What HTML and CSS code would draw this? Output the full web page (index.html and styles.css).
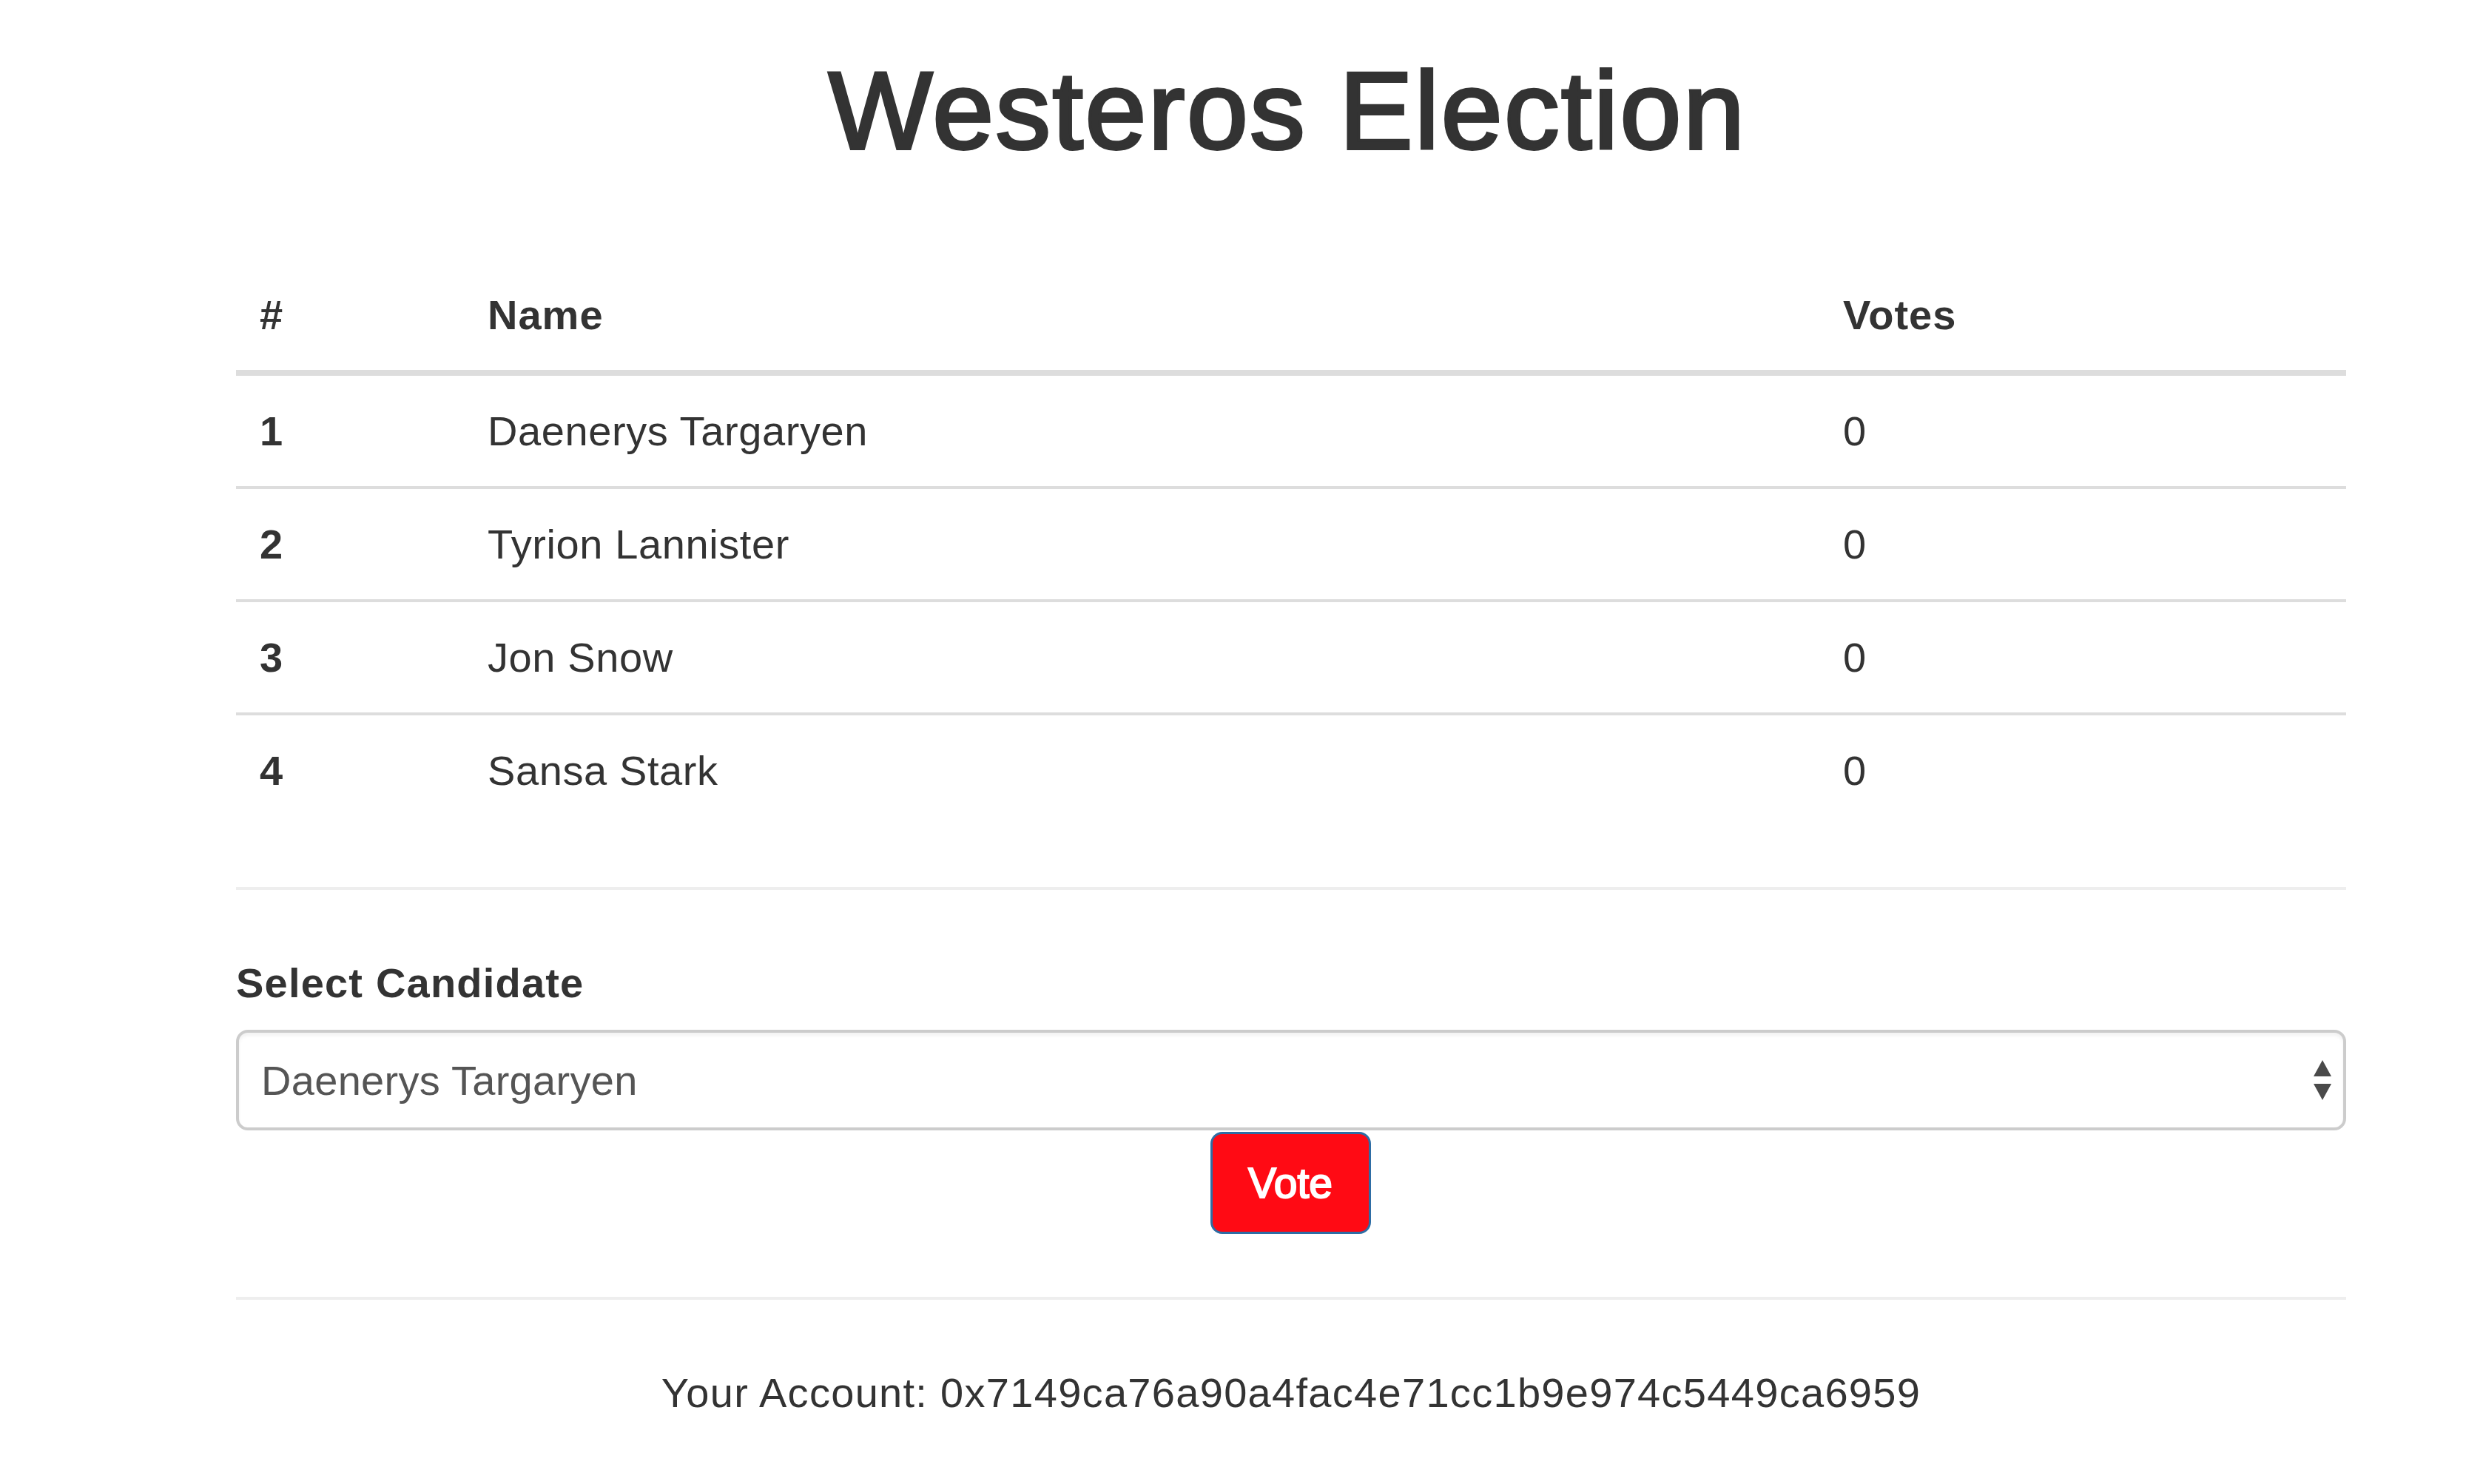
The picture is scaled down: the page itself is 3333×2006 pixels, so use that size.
FILE: index.html
```html
<!DOCTYPE html>
<html lang="en">
<head>
<meta charset="utf-8">
<title>Westeros Election</title>
<link rel="stylesheet" href="styles.css">
</head>
<body>
<div class="container">
  <h1 class="title">Westeros Election</h1>
  <table class="candidates">
    <colgroup>
      <col class="col-num">
      <col class="col-name">
      <col class="col-votes">
    </colgroup>
    <thead>
      <tr><th>#</th><th>Name</th><th>Votes</th></tr>
    </thead>
    <tbody>
      <tr><th>1</th><td>Daenerys Targaryen</td><td>0</td></tr>
      <tr><th>2</th><td>Tyrion Lannister</td><td>0</td></tr>
      <tr><th>3</th><td>Jon Snow</td><td>0</td></tr>
      <tr><th>4</th><td>Sansa Stark</td><td>0</td></tr>
    </tbody>
  </table>
  <hr class="rule rule-top">
  <form class="vote-form">
    <label class="field-label" for="candidate">Select Candidate</label>
    <div class="select-wrap">
      <select id="candidate" class="select">
        <option>Daenerys Targaryen</option>
        <option>Tyrion Lannister</option>
        <option>Jon Snow</option>
        <option>Sansa Stark</option>
      </select>
      <svg class="select-arrows" width="24" height="54" viewBox="0 0 24 54" aria-hidden="true">
        <polygon points="0,22 24,22 12,0" fill="#4a4a4a"/>
        <polygon points="0,32 24,32 12,54" fill="#4a4a4a"/>
      </svg>
    </div>
    <div class="actions">
      <button type="button" class="btn-vote">Vote</button>
    </div>
  </form>
  <hr class="rule rule-bottom">
  <p class="account">Your Account: 0x7149ca76a90a4fac4e71cc1b9e974c5449ca6959</p>
</div>
</body>
</html>
```

FILE: styles.css
```css
html, body {
  margin: 0;
  padding: 0;
  background: #ffffff;
}

body {
  font-family: "Liberation Sans", Arial, Helvetica, sans-serif;
  color: #333333;
  font-size: 56px;
  line-height: 80px;
}

.container {
  margin-left: 319px;
  width: 2852px;
  padding-top: 70px;
}

.title {
  margin: 0 0 123px 0;
  padding-right: 10px;
  font-size: 149px;
  line-height: 160px;
  font-weight: normal;
  letter-spacing: 2.5px;
  -webkit-text-stroke: 4px #333333;
  text-align: center;
  color: #333333;
}

.candidates {
  width: 100%;
  table-layout: fixed;
  border-collapse: separate;
  border-spacing: 0;
  margin-bottom: 83px;
}

.col-num { width: 308px; }
.col-name { width: 1832px; }
.col-votes { width: 712px; }

.candidates th,
.candidates td {
  padding: 32px 32px;
  line-height: 85px;
  text-align: left;
  vertical-align: top;
  font-size: 56px;
}

.candidates th {
  font-weight: bold;
  letter-spacing: 1px;
}

.candidates td {
  font-weight: normal;
  letter-spacing: 0.6px;
}

.candidates thead th {
  padding-top: 30px;
  vertical-align: bottom;
  border-bottom: 8px solid #dddddd;
}

.candidates tbody tr + tr > th,
.candidates tbody tr + tr > td {
  border-top: 4px solid #dddddd;
}

.rule {
  height: 0;
  margin: 0;
  border: 0;
  border-top: 4px solid #eeeeee;
}

.rule-bottom {
  margin-top: 85px;
}

.vote-form {
  margin: 0;
}

.field-label {
  display: block;
  margin-top: 86px;
  margin-bottom: 23px;
  font-weight: bold;
  font-size: 56px;
  line-height: 80px;
  letter-spacing: 1.2px;
}

.select-wrap {
  position: relative;
}

.select {
  display: block;
  width: 100%;
  height: 136px;
  box-sizing: border-box;
  margin: 0;
  padding: 0 80px 0 30px;
  border: 4px solid #cccccc;
  border-radius: 16px;
  background: #ffffff;
  box-shadow: inset 0 4px 4px rgba(0, 0, 0, 0.05);
  font-family: "Liberation Sans", Arial, Helvetica, sans-serif;
  font-size: 56px;
  letter-spacing: 0.3px;
  color: #555555;
  -webkit-appearance: none;
  appearance: none;
  outline: none;
}

.select-arrows {
  position: absolute;
  top: 41px;
  right: 20px;
  pointer-events: none;
}

.actions {
  text-align: center;
  padding-top: 2px;
}

.btn-vote {
  display: inline-block;
  width: 217px;
  height: 138px;
  box-sizing: border-box;
  margin: 0 0 0 -2px;
  padding: 0;
  border: 3px solid #2e6da4;
  border-radius: 16px;
  background: #ff0a14;
  color: #ffffff;
  font-family: "Liberation Sans", Arial, Helvetica, sans-serif;
  font-size: 57px;
  font-weight: normal;
  -webkit-text-stroke: 2px #ffffff;
  line-height: 1;
  cursor: pointer;
}

.account {
  margin: 86px 0 0 0;
  text-align: center;
  font-size: 56px;
  line-height: 80px;
  letter-spacing: 1.3px;
  color: #333333;
}
```
